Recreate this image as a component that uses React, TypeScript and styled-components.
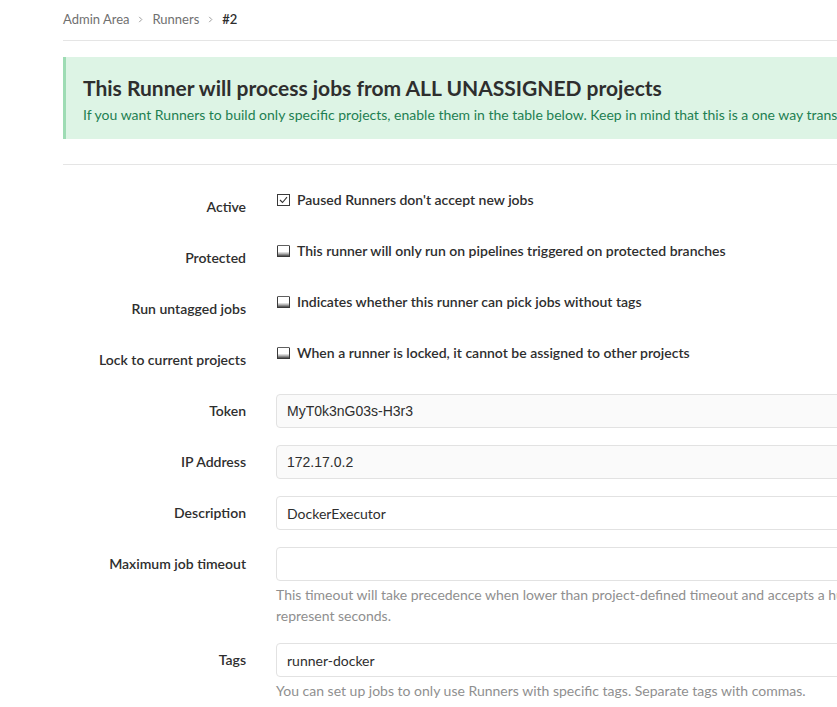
import React from 'react';
import styled, { createGlobalStyle } from 'styled-components';

const GlobalStyle = createGlobalStyle`
  html, body {
    margin: 0;
    padding: 0;
    overflow: hidden;
    background: #fff;
  }
  body {
    font-family: Lato, "Noto Sans", sans-serif;
    color: #2e2e2e;
  }
`;

const Wrapper = styled.div`
  width: 1140px;
  padding-left: 63px;
`;

const Breadcrumbs = styled.div`
  display: flex;
  align-items: center;
  height: 40px;
  border-bottom: 1px solid #e5e5e5;
  font-size: 13px;
  color: #707070;
`;

const Crumb = styled.span<{ $current?: boolean }>`
  color: ${(p) => (p.$current ? '#2e2e2e' : '#707070')};
  font-weight: ${(p) => (p.$current ? 600 : 400)};
  padding-bottom: 3px;
`;

const Chevron = styled.svg`
  width: 7px;
  height: 7px;
  margin: 0 8px 2px;
`;

const Callout = styled.div`
  margin-top: 16px;
  background: #ddf4e5;
  border-left: 3px solid #9edcb4;
  padding: 16px 17px 15px;
  height: 51px;
`;

const CalloutTitle = styled.h4`
  margin: 0;
  font-size: 21px;
  font-weight: 700;
  line-height: 30px;
  color: #2e2e2e;
  white-space: nowrap;
`;

const CalloutText = styled.p`
  margin: 2px 0 0;
  font-size: 14px;
  line-height: 20px;
  color: #1d7f52;
  white-space: nowrap;
`;

const Divider = styled.hr`
  border: 0;
  border-top: 1px solid #e5e5e5;
  margin: 25px 0 0;
`;

const Form = styled.form`
  padding-top: 25px;
`;

const Row = styled.div`
  display: grid;
  grid-template-columns: 183px 1fr;
  column-gap: 30px;
  margin-bottom: 17px;
`;

const Label = styled.label`
  text-align: right;
  font-size: 14px;
  font-weight: 600;
  line-height: 20px;
  padding-top: 7px;
  color: #2e2e2e;
`;

const CheckRow = styled.label`
  display: flex;
  align-items: flex-start;
  height: 34px;
  font-size: 14px;
  font-weight: 600;
  line-height: 20px;
  color: #2e2e2e;
`;

const Box = styled.span<{ $checked?: boolean }>`
  display: inline-flex;
  align-items: center;
  justify-content: center;
  box-sizing: border-box;
  width: 13px;
  height: 12px;
  margin: 4px 7px 0 1px;
  border: 1px solid #3a3a3a;
  border-top-color: ${(p) => (p.$checked ? '#3a3a3a' : 'transparent')};
  background: ${(p) =>
    p.$checked ? '#fff' : 'linear-gradient(to bottom, #fff 0%, #fff 55%, #b8b8b8 75%, #4a4a4a 100%)'};
`;

const Input = styled.input<{ $readonly?: boolean }>`
  box-sizing: border-box;
  width: 100%;
  height: 34px;
  padding: 6px 10px;
  border: 1px solid #e2e2e2;
  border-radius: 4px;
  background: ${(p) => (p.$readonly ? '#fafafa' : '#fff')};
  font-size: 14px;
  color: #2e2e2e;
  font-family: ${(p) => (p.$readonly ? '"Liberation Sans", Arial, sans-serif' : 'Lato, "Noto Sans", sans-serif')};
  outline: none;
`;

const Help = styled.p`
  margin: 3px 0 0;
  font-size: 14px;
  line-height: 21px;
  color: #8f8f8f;
  white-space: nowrap;
`;

const ChevronIcon = () => (
  <Chevron viewBox="0 0 8 8">
    <path d="M2.5 1 L5.5 4 L2.5 7" fill="none" stroke="#999" strokeWidth="1.1" />
  </Chevron>
);

const checks = [
  { label: 'Active', text: "Paused Runners don't accept new jobs", checked: true },
  { label: 'Protected', text: 'This runner will only run on pipelines triggered on protected branches', checked: false },
  { label: 'Run untagged jobs', text: 'Indicates whether this runner can pick jobs without tags', checked: false },
  { label: 'Lock to current projects', text: 'When a runner is locked, it cannot be assigned to other projects', checked: false },
];

export default function App() {
  return (
    <>
      <GlobalStyle />
      <Wrapper>
        <Breadcrumbs>
          <Crumb>Admin Area</Crumb>
          <ChevronIcon />
          <Crumb>Runners</Crumb>
          <ChevronIcon />
          <Crumb $current>#2</Crumb>
        </Breadcrumbs>

        <Callout>
          <CalloutTitle>This Runner will process jobs from ALL UNASSIGNED projects</CalloutTitle>
          <CalloutText>
            If you want Runners to build only specific projects, enable them in the table below. Keep in mind that
            this is a one way transition.
          </CalloutText>
        </Callout>

        <Divider />

        <Form>
          {checks.map((c) => (
            <Row key={c.label}>
              <Label>{c.label}</Label>
              <CheckRow>
                <Box $checked={c.checked}>
                  {c.checked && (
                    <svg width="9" height="8" viewBox="0 0 9 8">
                      <path d="M1 4 L3.5 6.5 L8 1.2" fill="none" stroke="#333" strokeWidth="1.1" />
                    </svg>
                  )}
                </Box>
                {c.text}
              </CheckRow>
            </Row>
          ))}

          <Row>
            <Label>Token</Label>
            <Input $readonly readOnly value="MyT0k3nG03s-H3r3" />
          </Row>
          <Row>
            <Label>IP Address</Label>
            <Input $readonly readOnly value="172.17.0.2" />
          </Row>
          <Row>
            <Label>Description</Label>
            <Input readOnly value="DockerExecutor" />
          </Row>
          <Row>
            <Label>Maximum job timeout</Label>
            <div>
              <Input readOnly value="" />
              <Help>
                This timeout will take precedence when lower than project-defined timeout and accepts a human readable
                time input language like "1 hour". Values without specification
                <br />
                represent seconds.
              </Help>
            </div>
          </Row>
          <Row>
            <Label>Tags</Label>
            <div>
              <Input readOnly value="runner-docker" />
              <Help>You can set up jobs to only use Runners with specific tags. Separate tags with commas.</Help>
            </div>
          </Row>
        </Form>
      </Wrapper>
    </>
  );
}
